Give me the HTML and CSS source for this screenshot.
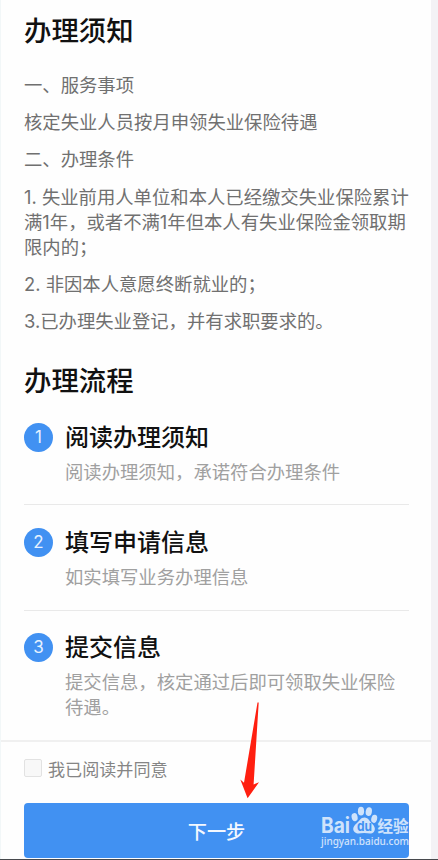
FILE: index.html
```
<!DOCTYPE html>
<html lang="zh-CN">

<head>
  <meta charset="UTF-8">
  <title>办理须知</title>
  <link rel="stylesheet" href="styles.css">
</head>

<body>

  <div class="page">
    <main class="content">
      <section class="notice">
        <h2>办理须知</h2>
        <p>一、服务事项</p>
        <p>核定失业人员按月申领失业保险待遇</p>
        <p>二、办理条件</p>
        <p>1. 失业前用人单位和本人已经缴交失业保险累计<br>满1年，或者不满1年但本人有失业保险金领取期<br>限内的；</p>
        <p>2. 非因本人意愿终断就业的；</p>
        <p>3.已办理失业登记，并有求职要求的。</p>
      </section>

      <section class="flow">
        <h2>办理流程</h2>
        <div class="step">
          <span class="num">1</span>
          <div>
            <h3>阅读办理须知</h3>
            <div class="desc">阅读办理须知，承诺符合办理条件</div>
          </div>
        </div>
        <div class="step">
          <span class="num">2</span>
          <div>
            <h3>填写申请信息</h3>
            <div class="desc">如实填写业务办理信息</div>
          </div>
        </div>
        <div class="step">
          <span class="num">3</span>
          <div>
            <h3>提交信息</h3>
            <div class="desc">提交信息，核定通过后即可领取失业保险<br>待遇。</div>
          </div>
        </div>
      </section>
    </main>

    <footer class="footer">
      <label class="agree"><input type="checkbox">我已阅读并同意</label>
      <button class="next">下一步</button>
    </footer>

    <svg class="arrow" width="20" height="98" viewBox="0 0 20 98">
      <path d="M17.5 0.5 L18.7 0.5 L13.6 82.5 L19 80.3 L7.6 96.3 L0.3 77.5 L4 80.8 Z" fill="#ff1f10" />
    </svg>

    <!-- 水印 -->
    <svg class="watermark" width="92" height="48" viewBox="0 0 92 48">
      <g fill="#fff">
        <text class="logo" x="2" y="28" textLength="29" lengthAdjust="spacingAndGlyphs">Bai</text>
        <ellipse cx="35.6" cy="12.2" rx="3" ry="4.1" transform="rotate(-12 35.6 12.2)" />
        <ellipse cx="42" cy="6.2" rx="3.1" ry="4.4" />
        <ellipse cx="49.8" cy="6.6" rx="3.1" ry="4.4" transform="rotate(10 49.8 6.6)" />
        <ellipse cx="55.2" cy="13.8" rx="2.9" ry="4.1" transform="rotate(14 55.2 13.8)" />
        <path d="M45.5 12.6 C49.5 12.6 50.5 16.5 53 18.8 C56 21.5 56.8 24.8 54.8 27 C52.5 29.5 49 28 45.2 28 C41.5 28 38.5 29.5 35.8 27.3 C33.2 25 34 21.5 37.2 18.8 C40.3 16.3 41.5 12.6 45.5 12.6 Z" />
        <text class="cn" x="58.5" y="26.8">经验</text>
        <text class="url" x="2" y="40" textLength="88" lengthAdjust="spacingAndGlyphs">jingyan.baidu.com</text>
      </g>
      <text class="du" x="38" y="26.3" textLength="15" lengthAdjust="spacingAndGlyphs">du</text>
    </svg>
  </div>

</body>

</html>
```
FILE: styles.css
```
* {
  box-sizing: border-box;
}

body {
  margin: 0;
  background: #f3f2f5;
  font-family: Inter, "Noto Sans CJK SC", sans-serif;
}

.page {
  position: relative;
  width: 431px;
  height: 860px;
  overflow: hidden;
  background: #fefefe;
  border-left: 1px solid #f2f7f8;
}

/* 底部黑线贯穿整个屏幕 */
body::after {
  content: "";
  position: absolute;
  left: 0;
  bottom: 0;
  width: 100%;
  height: 1px;
  background: #47494d;
}

.content {
  height: 742px;
  padding: 12px 22px 0 23px;
  border-bottom: 2px solid #f0f0f0;
}

h2 {
  margin: 0 0 23px;
  font-size: 27.4px;
  line-height: 38px;
  font-weight: 500;
  color: #111;
}

p {
  margin: 0 0 12.2px;
  font-size: 18.35px;
  line-height: 25px;
  color: #707070;
  white-space: nowrap;
}

.flow {
  padding-top: 16px;
}

.flow h2 {
  margin: 0;
}

.step {
  display: flex;
  gap: 12px;
  height: 105.3px;
  padding-top: 22.5px;
  border-bottom: 1.5px solid #e9e9e9;
}

.step:last-child {
  border-bottom: none;
}

.num {
  width: 29px;
  height: 29px;
  border-radius: 50%;
  background: #4191f2;
  color: #e6f1ff;
  font-size: 17px;
  line-height: 29px;
  text-align: center;
}

h3 {
  margin: 0 0 7px;
  font-size: 24px;
  line-height: 30px;
  font-weight: 500;
  color: #111;
}

.desc {
  font-size: 18.35px;
  line-height: 25px;
  color: #a0a0a0;
  white-space: nowrap;
}

.footer {
  padding: 13px 22px 0 23px;
}

.agree {
  display: flex;
  align-items: center;
  gap: 6px;
  height: 26px;
  font-size: 17.1px;
  color: #858585;
}

.agree input {
  appearance: none;
  width: 18px;
  height: 18px;
  margin: 0;
  background: #f8f8f8;
  border: 1.5px solid #e2e2e2;
  border-radius: 2px;
}

.next {
  display: block;
  width: 100%;
  height: 55px;
  margin-top: 22px;
  padding: 0;
  border: none;
  border-radius: 4px;
  background: #4191f2;
  color: #f3f8ff;
  font-family: inherit;
  font-size: 19.2px;
  font-weight: 500;
}

.arrow {
  position: absolute;
  left: 239px;
  top: 702px;
}

.watermark {
  position: absolute;
  left: 318px;
  top: 805px;
  opacity: 0.75;
}

.logo {
  font: 700 21px Inter, sans-serif;
}

.cn {
  font: 700 15.5px "Noto Sans CJK SC", sans-serif;
}

.url {
  font: 500 11px "Noto Sans", sans-serif;
}

.du {
  font: 700 13px Inter, sans-serif;
  fill: #4191f2;
}
```
